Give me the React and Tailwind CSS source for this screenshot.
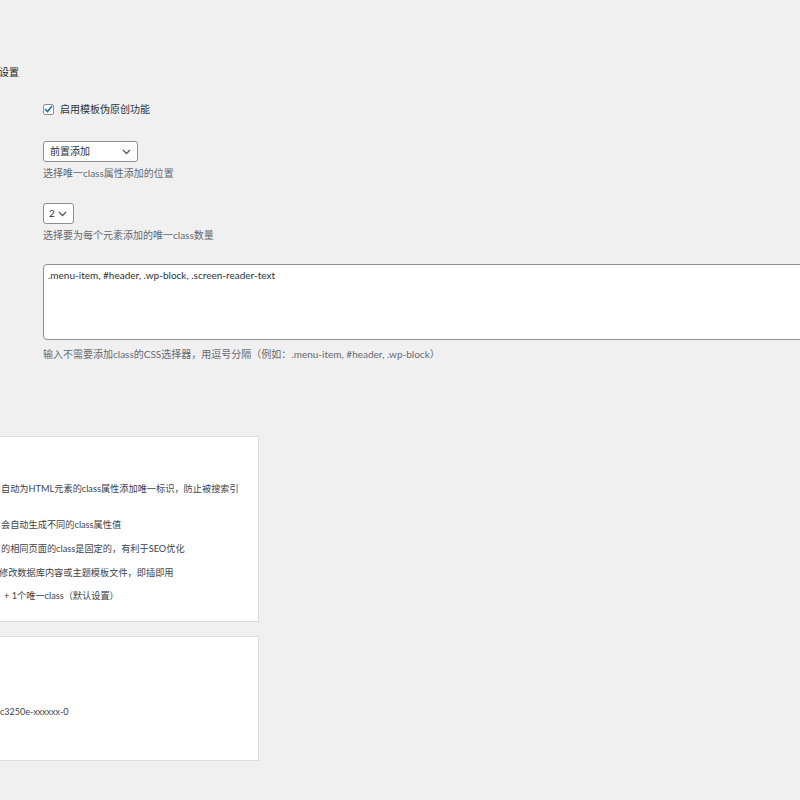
import React from "react";

const font = { fontFamily: 'Lato, "Noto Sans CJK SC", sans-serif' };

function Chevron() {
  return (
    <svg width="9" height="6" viewBox="0 0 9 6" fill="none">
      <path d="M1 1 L4.5 4.5 L8 1" stroke="#50575e" strokeWidth="1.3" />
    </svg>
  );
}

export default function App() {
  return (
    <div
      className="w-[800px] h-[800px] overflow-hidden bg-[#f0f0f1] text-[10px] text-[#1d2327]"
      style={font}
    >
      <div className="pt-[64px]">
        <div className="ml-[-1px] leading-[16px] text-[#1d2327]">设置</div>

        <div className="ml-[43px] mt-[21px] flex items-center gap-[6px] h-[16px]">
          <div className="w-[11px] h-[11px] rounded-[2px] border border-[#8c8f94] bg-white flex items-center justify-center">
            <svg width="9" height="8" viewBox="0 0 9 8" fill="none">
              <path d="M1 4 L3.5 6.5 L8 1" stroke="#2271b1" strokeWidth="1.7" />
            </svg>
          </div>
          <span className="text-[#2c3338]">启用模板伪原创功能</span>
        </div>

        <div className="ml-[43px] mt-[24px] w-[95px] h-[21px] rounded-[3px] border border-[#8c8f94] bg-white flex items-center justify-between pl-[6px] pr-[6px]">
          <span className="text-[#2c3338]">前置添加</span>
          <Chevron />
        </div>
        <div className="ml-[43px] mt-[3px] leading-[16px] text-[#646970]">选择唯一class属性添加的位置</div>

        <div className="ml-[43px] mt-[22px] w-[31px] h-[21px] rounded-[3px] border border-[#8c8f94] bg-white flex items-center gap-[3px] pl-[5px]">
          <span className="text-[#2c3338]">2</span>
          <Chevron />
        </div>
        <div className="ml-[43px] mt-[3px] leading-[16px] text-[#646970]">选择要为每个元素添加的唯一class数量</div>

        <div className="ml-[43px] mt-[21px] w-[800px] h-[76px] rounded-[4px] border border-[#8c8f94] bg-white pl-[4px] pt-[2px] leading-[16px] text-[#2c3338]">
          .menu-item, #header, .wp-block, .screen-reader-text
        </div>
        <div className="ml-[43px] mt-[6px] leading-[16px] text-[#646970]">
          输入不需要添加class的CSS选择器，用逗号分隔（例如：.menu-item, #header, .wp-block）
        </div>

        <div className="ml-[-20px] mt-[74px] w-[279px] h-[186px] bg-white border border-[#dcdcde] pl-[20px] pt-[44px] text-[9.2px] text-[#3c434a] leading-[16px] whitespace-nowrap overflow-hidden">
          <div>自动为HTML元素的class属性添加唯一标识，防止被搜索引</div>
          <div className="mt-[20px]">会自动生成不同的class属性值</div>
          <div className="mt-[8px]">的相同页面的class是固定的，有利于SEO优化</div>
          <div className="mt-[8px] ml-[-2px]">修改数据库内容或主题模板文件，即插即用</div>
          <div className="mt-[7px] ml-[3px]">+ 1个唯一class（默认设置）</div>
        </div>

        <div className="ml-[-20px] mt-[14px] w-[279px] h-[125px] bg-white border border-[#dcdcde] pl-[20px] pt-[67px] text-[9px] text-[#3c434a] leading-[16px] whitespace-nowrap overflow-hidden">
          <div className="ml-[-1px]">c3250e-xxxxxx-0</div>
        </div>
      </div>
    </div>
  );
}
